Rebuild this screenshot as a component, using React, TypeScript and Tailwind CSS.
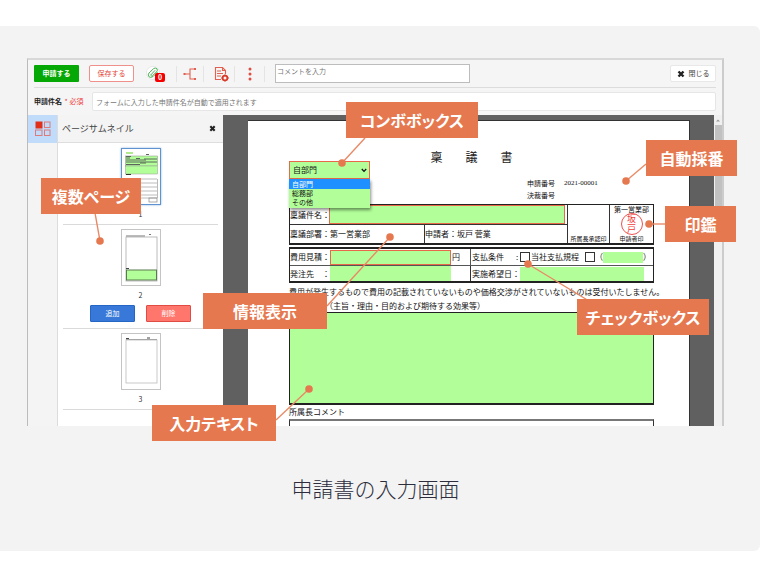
import type { ReactNode } from 'react'

const callouts = [
  { text: 'コンボボックス', box: 'left-[319px] top-11 w-[132px]' },
  { text: '自動採番', box: 'left-[619px] top-[82px] w-[91px]' },
  { text: '印鑑', box: 'left-[638px] top-[148px] w-[71px]' },
  { text: '複数ページ', box: 'left-[14px] top-[120px] w-[100px]' },
  { text: '情報表示', box: 'left-[176px] top-[235px] w-[124px]' },
  { text: 'チェックボックス', box: 'left-[550px] top-[241px] w-[132px]' },
  { text: '入力テキスト', box: 'left-[125px] top-[347px] w-[124px]' },
]

// [label end x, y, dot x, y]
const pointers = [
  [338, 80, 315, 105],
  [619, 106, 599, 123],
  [638, 166, 622, 166],
  [68, 155, 73, 183],
  [300, 248, 363, 179],
  [562, 243, 501, 206],
  [249, 362, 282, 331],
]

function Callouts() {
  return (
    <>
      <svg className="pointer-events-none absolute top-0 left-0 overflow-visible" width="697" height="368" aria-hidden="true">
        {pointers.map(([x1, y1, x2, y2]) => (
          <g key={`${x1}-${y1}`}>
            <line x1={x1} y1={y1} x2={x2} y2={y2} stroke="#e98a67" strokeWidth="1.4" />
            <circle cx={x2} cy={y2} r="3.8" fill="#e67850" />
          </g>
        ))}
      </svg>
      {callouts.map((c) => (
        <div
          key={c.text}
          className={`absolute flex h-9 items-center justify-center bg-[#e67850] pb-px text-[16px] font-bold whitespace-nowrap text-white [font-feature-settings:'palt'] ${c.box}`}
        >
          {c.text}
        </div>
      ))}
    </>
  )
}

function Divider() {
  return <div className="h-4 w-px shrink-0 bg-[#e4e4e4]" />
}

function CrossIcon({ size }: { size: number }) {
  return (
    <svg width={size} height={size} viewBox="0 0 8 8" aria-hidden="true">
      <path d="M1.5 1.5l5 5M6.5 1.5l-5 5" stroke="#222" strokeWidth="2.4" />
    </svg>
  )
}

function Toolbar() {
  return (
    <div className="mx-1.5 flex h-7 items-center border-b border-[#dcdcdc]">
      <button className="h-[17px] w-[45px] shrink-0 rounded-[1px] bg-[#06a806] text-[7px] font-bold text-white">申請する</button>
      <button className="ml-[10px] h-[17px] w-[45px] shrink-0 rounded-[2px] border border-[#f0908a] bg-white text-[7px] text-[#e2473a]">
        保存する
      </button>
      <button className="relative ml-3 h-4 w-[19px] shrink-0" aria-label="添付">
        <svg className="absolute top-0 left-0" width="14" height="14" viewBox="0 0 14 14" aria-hidden="true">
          <circle cx="7" cy="7" r="6.6" fill="#fff" stroke="#dedede" strokeWidth=".6" />
          <path
            d="M11.400 6.200L7 10.600Q4.800 12 3 10.800Q1.400 9 3 7L7.600 2.600Q9.400 1.400 11 2.800Q12 4.400 10.600 5.800L6.400 9.800Q5.200 10.200 4.600 9.200L8.800 4.600"
            fill="none"
            stroke="#4cb558"
            strokeWidth="1"
            strokeLinecap="round"
          />
        </svg>
        <span className="absolute right-0 bottom-0 flex h-[9px] w-[10px] items-center justify-center rounded-[2px] bg-[#f40000] text-[7px] leading-none font-bold text-white">
          0
        </span>
      </button>
      <div className="ml-[11px] flex items-center">
        <Divider />
        <button className="flex h-5 w-[26px] items-center justify-center" aria-label="経路">
          <svg width="14" height="14" viewBox="0 0 14 14" fill="none" stroke="#e2604f" aria-hidden="true">
            <path d="M1.5 7H7M12 2H7v10h5" strokeWidth="1.1" />
            <path d="M.5 7h2M11 2h2M11 12h2" strokeWidth="2.2" />
          </svg>
        </button>
        <Divider />
        <button className="flex h-5 w-[30px] items-center justify-center pl-1" aria-label="文書">
          <svg width="15" height="16" viewBox="0 0 15 16" fill="none" stroke="#e2604f" aria-hidden="true">
            <path d="M7 13.5H1.5v-12h7L11.5 4.500V8" strokeWidth="1.1" />
            <path d="M8.500 1.500v3h3M3 5h4M3 7.500h6M3 10h4" strokeWidth="1.100" />
            <circle cx="11" cy="12" r="2.400" stroke="#d93a28" strokeWidth="1.800" />
            <path d="M11 8.400v1M11 14.600v1M7.400 12h1M13.600 12h1" stroke="#d93a28" strokeWidth="1.300" />
          </svg>
        </button>
        <Divider />
        <button className="flex h-5 w-[29px] items-center justify-center" aria-label="メニュー">
          <svg width="4" height="14" viewBox="0 0 4 14" fill="#df4e42" aria-hidden="true">
            <circle cx="2" cy="2" r="1.500" />
            <circle cx="2" cy="7" r="1.500" />
            <circle cx="2" cy="12" r="1.500" />
          </svg>
        </button>
        <Divider />
      </div>
      <textarea
        aria-label="コメント"
        placeholder="コメントを入力"
        className="ml-[10px] h-[19px] w-[195px] shrink-0 resize-none overflow-hidden border border-[#bdbdbd] bg-white px-px text-[7px] leading-3 placeholder:text-[#777]"
      />
      <button className="ml-auto flex h-[17px] w-[46px] shrink-0 items-center justify-center gap-1 rounded-[2px] border border-[#e8e8e8] bg-white text-[7px] text-[#444]">
        <CrossIcon size={8} />
        閉じる
      </button>
    </div>
  )
}

function SubjectRow() {
  return (
    <div className="mx-1.5 flex h-[27px] items-center">
      <label htmlFor="subject" className="w-[58px] shrink-0 text-[7px] font-bold whitespace-nowrap text-[#222]">
        申請件名 <span className="ml-px font-normal text-[#ee3b3b]">* 必須</span>
      </label>
      <input
        id="subject"
        placeholder="フォームに入力した申請件名が自動で適用されます"
        className="h-[19px] min-w-0 flex-1 rounded-[2px] border border-[#e6e6e6] bg-white px-[3px] text-[7px] placeholder:text-[#777]"
      />
    </div>
  )
}

function Thumb({ selected, children }: { selected?: boolean; children: ReactNode }) {
  return (
    <button
      className={`mx-auto block h-[57px] w-10 border bg-white ${selected ? 'border-[#5f93cf] shadow-[0_0_2px_#8fb4e0]' : 'border-[#c4c4c4]'}`}
    >
      <svg width="38" height="55" viewBox="0 0 38 55" aria-hidden="true">
        {children}
      </svg>
    </button>
  )
}

function PageNo({ n }: { n: number }) {
  return <div className="h-[19px] text-center text-[7px] leading-[19px] text-[#333]">{n}</div>
}

function Sidebar() {
  return (
    <>
      <div className="w-[30px] shrink-0 border-r border-[#dcdcdc] bg-[#f4f4f4]">
        <button className="flex h-7 w-full items-center justify-center bg-[#c0dcfa]" aria-label="サムネイル">
          <svg width="16" height="16" viewBox="0 0 16 16" fill="none" stroke="#dc7b7b" strokeWidth="1" aria-hidden="true">
            <rect x="1" y="1" width="6" height="6" fill="#e0301a" stroke="#e0301a" />
            <rect x="9.500" y="1" width="5.500" height="5.500" />
            <rect x=".5" y="9" width="6.500" height="5.500" />
            <rect x="9.500" y="9" width="5.500" height="5.500" />
          </svg>
        </button>
      </div>
      <aside className="w-[165px] shrink-0 bg-white">
        <div className="flex h-7 items-center justify-between border-b border-[#dedede] bg-[#f4f4f4] pr-[7px] pl-1 text-[9px] text-[#444]">
          ページサムネイル
          <button aria-label="閉じる">
            <CrossIcon size={7} />
          </button>
        </div>
        <div className="px-[5px] pt-px">
          <div className="border-b border-[#dadada] pt-1">
            <Thumb selected>
              <rect x="4" y="3" width="7" height="2" fill="#b0e890" />
              <rect x="3.500" y="7" width="32" height="10" fill="#b2ff99" stroke="#888" strokeWidth=".5" />
              <path d="M4 7.500h5M24 5.500h3M4 9h4M4 11h20M14 9.500h4M22 10h13M4 13h31M18 14h6M4 15.500h14" stroke="#5a665a" strokeWidth="1" />
              <rect x="3.500" y="17" width="32" height="8" fill="#b2ff99" stroke="#999" strokeWidth=".5" />
              <path d="M4 25.500h5" stroke="#333" />
              <path d="M3 30h32M3 34h32M3 38h32M3 42h32M3 46h32M3 49h32M3.500 30v19M35.500 30v19" stroke="#aaa" strokeWidth=".8" />
              <rect x="27" y="49" width="8" height="4" fill="none" stroke="#888" strokeWidth=".7" />
            </Thumb>
            <PageNo n={1} />
          </div>
          <div className="border-b border-[#dadada] pt-1">
            <Thumb>
              <path d="M4 6h19M27 4.500h2" stroke="#777" />
              <rect x="4" y="7" width="31" height="44" fill="none" stroke="#aaa" strokeWidth=".8" />
              <rect x="4.500" y="40" width="30" height="10" fill="#b2ff99" stroke="#5a7a50" />
              <path d="M4 38.500h3" stroke="#444" />
            </Thumb>
            <PageNo n={2} />
            <div className="mb-1.5 flex justify-center gap-[11px]">
              <button className="h-[17px] w-[45px] rounded-[1px] border border-[#2566c4] bg-[#3878d8] text-[7px] leading-none text-white">追加</button>
              <button className="h-[17px] w-[45px] rounded-[1px] border border-[#e04c44] bg-[#ff766c] text-[7px] leading-none text-white">削除</button>
            </div>
          </div>
          <div className="border-b border-[#dadada] pt-1">
            <Thumb>
              <path d="M4 4.500h3M25 4h3" stroke="#444" />
              <path d="M4 5.500h31" stroke="#999" />
              <rect x="4" y="6" width="31" height="43" fill="none" stroke="#bbb" strokeWidth=".8" />
            </Thumb>
            <PageNo n={3} />
          </div>
        </div>
      </aside>
    </>
  )
}

function FormHeader() {
  return (
    <div className="flex h-[83px]">
      <div className="relative w-[81px] shrink-0 pt-10">
        <select
          aria-label="部門"
          className="block h-[18px] w-full appearance-none border border-[#e8694a] bg-[#b2ff99] pl-[3px] text-[8px] leading-none"
        >
          <option>自部門</option>
          <option>総務部</option>
          <option>その他</option>
        </select>
        <svg className="absolute top-[47px] right-[3px]" width="6" height="5" viewBox="0 0 6 5" aria-hidden="true">
          <path d="M.8 1l2.200 2.400L5.200 1" fill="none" stroke="#111" strokeWidth="1.300" />
        </svg>
        <ul className="absolute top-[58px] left-0 z-10 w-full bg-[#b2ff99] pb-px text-[7px] leading-[9px] shadow-[1px_2px_3px_rgba(0,0,0,0.45)]">
          <li className="bg-[#1e90ff] pl-[3px] leading-[10px] text-white">自部門</li>
          <li className="pl-[3px]">総務部</li>
          <li className="pl-[3px]">その他</li>
        </ul>
      </div>
      <div className="flex flex-1 flex-col">
        <h2 className="flex justify-center gap-[23px] pt-7 pr-[81px] text-[12px] leading-4 text-[#222]">
          <span>稟</span>
          <span>議</span>
          <span>書</span>
        </h2>
        <dl className="mt-3 grid w-[127px] grid-cols-[37px_1fr] self-end text-[7px] leading-3">
          <dt>申請番号</dt>
          <dd className="font-['Liberation_Serif',serif]">2021-00001</dd>
          <dt>決裁番号</dt>
        </dl>
      </div>
    </div>
  )
}

function ApplicantTable() {
  return (
    <div className="flex border-x border-t border-b-2 border-[#222]">
      <div className="min-w-0 flex-1">
        <div className="flex h-[19px] items-center">
          <label htmlFor="title" className="w-[39px] shrink-0 whitespace-nowrap">
            稟議件名：
          </label>
          <input id="title" className="h-[19px] min-w-0 flex-1 border border-[#e8694a] bg-[#b2ff99]" />
          <div className="w-[2px]" />
        </div>
        <div className="flex h-[19px] items-center border-t border-[#333]">
          <div className="w-[134px] whitespace-nowrap">稟議部署：第一営業部</div>
          <div className="flex h-full flex-1 items-center border-l border-[#333] whitespace-nowrap">申請者：坂戸 菅業</div>
        </div>
      </div>
      <div className="flex w-[42px] items-end justify-center border-l border-[#333] text-[6px] leading-[9px] whitespace-nowrap">所属長承認印</div>
      <div className="flex w-[44px] flex-col items-center justify-between border-l border-[#333] whitespace-nowrap">
        <div className="text-[7px] leading-[8px]">第一営業部</div>
        <div className="flex size-[22px] flex-col items-center justify-center rounded-full border border-[#f05050] text-[9px] leading-[10px] text-[#f03c3c]">
          <span>坂</span>
          <span>戸</span>
        </div>
        <div className="text-[6px] leading-[8px]">申請者印</div>
      </div>
    </div>
  )
}

function TermsTable() {
  return (
    <div className="mt-[2px] grid grid-cols-[180px_1fr] border-x border-t-2 border-b-2 border-[#222]">
      <div className="flex h-[17px] items-center border-b border-[#555]">
        <label htmlFor="cost" className="w-10 whitespace-nowrap">
          費用見積：
        </label>
        <input id="cost" className="h-[15px] w-[121px] border border-[#e8694a] bg-[#b2ff99]" />
        <span className="pl-px">円</span>
      </div>
      <div className="flex h-[17px] items-center border-b border-l border-[#555] pl-px whitespace-nowrap">
        <span className="w-[44px]">支払条件</span>
        <span className="w-1">:</span>
        <input id="rule" type="checkbox" className="size-[10px] shrink-0 appearance-none border border-[#333] bg-white" />
        <label htmlFor="rule" className="w-[55px] pl-px">
          当社支払規程
        </label>
        <input type="checkbox" aria-label="その他" className="size-[10px] shrink-0 appearance-none border border-[#333] bg-white" />
        <span className="w-[8px]">（</span>
        <input aria-label="支払条件" className="h-[11px] w-10 bg-[#b2ff99]" />
        <span>）</span>
      </div>
      <div className="flex h-[15px] items-center">
        <label htmlFor="vendor" className="flex w-10 whitespace-nowrap">
          <span className="w-8">発注先</span>：
        </label>
        <input id="vendor" className="h-[15px] w-[121px] bg-[#b2ff99]" />
      </div>
      <div className="flex h-[15px] items-center border-l border-[#333] pl-px">
        <label htmlFor="wish" className="w-[48px] whitespace-nowrap">
          実施希望日：
        </label>
        <input id="wish" className="h-[14px] w-[124px] bg-[#b2ff99]" />
      </div>
    </div>
  )
}

function Paper() {
  return (
    <div className="min-w-0 flex-1 overflow-hidden border-t border-r border-[#333] bg-white pr-[35px] pl-[41px] text-[8px] leading-3 text-[#111]">
      <FormHeader />
      <ApplicantTable />
      <TermsTable />
      <p className="mt-[2px] leading-[14px] whitespace-nowrap">
        費用が発生するもので費用の記載されていないものや価格交渉がされていないものは受付いたしません。
      </p>
      <label htmlFor="body" className="block pl-9 leading-[13px]">
        （主旨・理由・目的および期待する効果等）
      </label>
      <textarea id="body" className="block h-[93px] w-full resize-none border border-b-2 border-[#222] bg-[#b2ff99]" />
      <p className="leading-[14px]">所属長コメント</p>
      <div className="h-[7px] border-x border-t-2 border-[#333] border-t-[#777]" />
    </div>
  )
}

export default function App() {
  return (
    <main className="pt-[26px] pr-[11px] pb-[25px] font-['Noto_Sans_CJK_JP','Liberation_Sans',sans-serif]" lang="ja">
      <figure className="rounded-r-md bg-[#f3f3f3] pt-8 pr-9 pb-[45px] pl-[27px]">
        <div className="relative">
          <div className="border-t-2 border-r-2 border-l border-t-[#d8d8d8] border-r-[#cccccc] border-l-[#bbb] bg-[#f5f5f5]">
            <Toolbar />
            <SubjectRow />
            <div className="flex">
              <Sidebar />
              <div className="flex min-w-0 flex-1 bg-[#606060] pt-[5px] pr-6 pl-[25px]">
                <Paper />
              </div>
              <div className="flex w-2 shrink-0 flex-col items-center bg-[#f0f0f0]">
                <svg width="8" height="10" viewBox="0 0 8 10" aria-hidden="true">
                  <path d="M2 6.500l2-2 2 2z" fill="#999" />
                </svg>
                <div className="h-[112px] w-[7px] bg-[#c1c1c1]" />
              </div>
            </div>
          </div>
          <Callouts />
        </div>
        <figcaption className="pt-11 text-center text-[21px] leading-9 font-light text-[#2d2d3d]">申請書の入力画面</figcaption>
      </figure>
    </main>
  )
}
